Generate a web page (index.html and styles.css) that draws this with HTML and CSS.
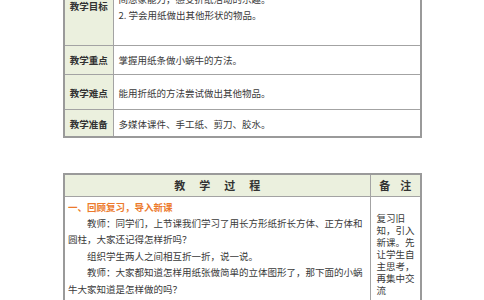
FILE: index.html
```html
<!DOCTYPE html>
<html lang="zh-CN">
<head>
<meta charset="utf-8">
<link rel="stylesheet" href="styles.css">
</head>
<body>
<div class="page">
  <table class="info">
    <colgroup><col class="c-label"><col class="c-text"></colgroup>
    <tr class="r-goal">
      <th>教学目标</th>
      <td class="goal">1. 通过观察、操作，学会用纸条折出小蜗牛，培养学生的动手能力和空间想象能力，感受折纸活动的乐趣。<br>2. 学会用纸做出其他形状的物品。</td>
    </tr>
    <tr class="r-key">
      <th>教学重点</th>
      <td>掌握用纸条做小蜗牛的方法。</td>
    </tr>
    <tr class="r-hard">
      <th>教学难点</th>
      <td>能用折纸的方法尝试做出其他物品。</td>
    </tr>
    <tr class="r-prep">
      <th>教学准备</th>
      <td>多媒体课件、手工纸、剪刀、胶水。</td>
    </tr>
  </table>

  <table class="process">
    <colgroup><col class="c-main"><col class="c-note"></colgroup>
    <tr class="head">
      <th><span class="spaced">教学过程</span></th>
      <th><span class="spaced2">备注</span></th>
    </tr>
    <tr>
      <td class="main">
        <p class="step">一、回顾复习，导入新课</p>
        <p class="para">教师：同学们，上节课我们学习了用长方形纸折长方体、正方体和圆柱，大家还记得怎样折吗？</p>
        <p class="para">组织学生两人之间相互折一折，说一说。</p>
        <p class="para">教师：大家都知道怎样用纸张做简单的立体图形了，那下面的小蜗牛大家知道是怎样做的吗？</p>
        <p class="step">二、自主活动，探索新知</p>
      </td>
      <td class="note"><div class="note-text">复习旧知，引入新课。先让学生自主思考，再集中交流</div></td>
    </tr>
  </table>
</div>
</body>
</html>
```

FILE: styles.css
```css
html, body {
  margin: 0;
  padding: 0;
  background: #ffffff;
}
body {
  width: 484px;
  height: 300px;
  overflow: hidden;
  font-family: "Noto Sans CJK SC", "Noto Sans", sans-serif;
  color: #3a3a3a;
}
.page {
  padding-left: 63px;
}
table {
  border-collapse: collapse;
  width: 359px;
  table-layout: fixed;
}
th, td {
  box-sizing: border-box;
}
.c-label { width: 49px; }
.c-main { width: 306px; }
.info {
  margin-top: -35px;
  border: 2px solid #9a9a9a;
}
.info th,
.info td {
  border: 1px solid #a3a3a3;
  font-size: 9.5px;
  line-height: 16px;
}
.info th {
  padding: 0;
  background: #ebf0de;
  font-weight: bold;
  color: #333;
  text-align: center;
  vertical-align: middle;
}
.info td {
  padding: 0 4px 0 5px;
  text-align: left;
  vertical-align: middle;
}
.info td.goal {
  vertical-align: top;
  padding-top: 8px;
}
.r-goal { height: 79px; }
.r-key { height: 29px; }
.r-hard { height: 35px; }
.r-prep { height: 28px; }
.r-hard td, .r-hard th,
.r-prep td, .r-prep th { padding-top: 3px; }

.process {
  margin-top: 35px;
  border: 2px solid #9a9a9a;
}
.process th,
.process td {
  border: 1px solid #a3a3a3;
}
.head th {
  height: 22px;
  padding: 0;
  background: #ebf0de;
  font-size: 11px;
  font-weight: bold;
  color: #333;
  text-align: center;
  vertical-align: middle;
  white-space: nowrap;
}
.spaced {
  letter-spacing: 14px;
  margin-right: -14px;
}
.spaced2 {
  letter-spacing: 10px;
  margin-right: -10px;
}
.main {
  padding: 2px 3px 0 3px;
  vertical-align: top;
  font-size: 9.5px;
  line-height: 16.4px;
}
.main p {
  margin: 0;
}
.step {
  color: #ec7a2c;
  font-weight: bold;
}
.para {
  text-indent: 2em;
}
.note {
  padding: 15px 0 0 6px;
  vertical-align: top;
}
.note-text {
  width: 39px;
  font-size: 9.5px;
  line-height: 12px;
  color: #3a3a3a;
}
```
